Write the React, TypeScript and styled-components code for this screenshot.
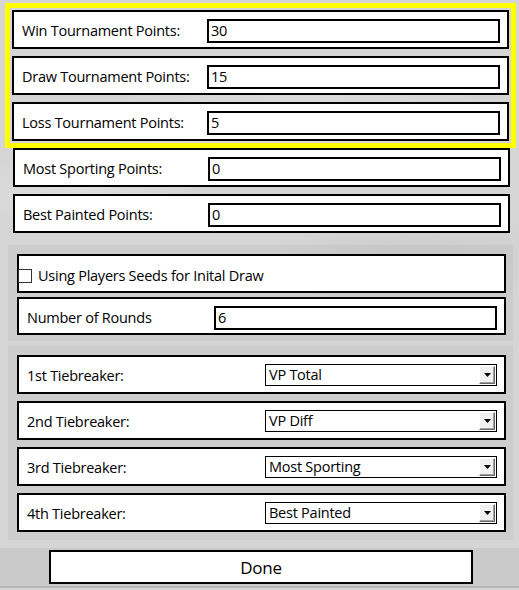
import React, { useState } from 'react';
import styled, { createGlobalStyle } from 'styled-components';

// TYPES
interface FieldRowProps {
    label: string;
    value: string;
}

interface TieProps {
    label: string;
    value: string;
}

// STYLES
const font = `'Open Sans', 'Noto Sans', 'DejaVu Sans', sans-serif`;

const GlobalStyle = createGlobalStyle`
    html, body {
        margin: 0;
        padding: 0;
        background: #d4d4d4;
    }
    * {
        box-sizing: border-box;
    }
`;

const Screen = styled.div`
    width: 519px;
    height: 590px;
    overflow: hidden;
    font-family: ${font};
    font-size: 14.5px;
    letter-spacing: -0.25px;
    color: #000;
    background:
        radial-gradient(ellipse 120px 40px at 80px 190px, rgba(255, 255, 255, 0.25), transparent),
        radial-gradient(ellipse 160px 50px at 420px 260px, rgba(0, 0, 0, 0.04), transparent),
        radial-gradient(ellipse 200px 60px at 300px 120px, rgba(255, 255, 255, 0.2), transparent),
        #d5d5d5;
    display: flex;
    flex-direction: column;
    padding-top: 3px;
`;

const Highlight = styled.div`
    margin-left: 5px;
    width: 511px;
    border: 5px solid #ffff00;
    padding: 2px 1px 2px 2px;
    display: flex;
    flex-direction: column;
    gap: 7px;
`;

const Plain = styled.div`
    margin-left: 13px;
    width: 497px;
    display: flex;
    flex-direction: column;
    gap: 7px;
`;

const Box = styled.div<{ $h?: number }>`
    height: ${({ $h }) => $h ?? 39}px;
    background: #fff;
    border: 2px solid #000;
    display: flex;
    align-items: flex-start;
    position: relative;
`;

const Row = styled(Box)`
    width: 497px;
    padding: 7px 7px 0 8px;
`;

const Label = styled.div<{ $w: number }>`
    width: ${({ $w }) => $w}px;
    flex-shrink: 0;
    line-height: 24px;
    white-space: nowrap;
`;

const TextInput = styled.div<{ $w: number }>`
    width: ${({ $w }) => $w}px;
    height: 24px;
    border: 2px solid #000;
    background: #fff;
    padding-left: 2px;
    line-height: 20px;
`;

const Panel = styled.div<{ $top: number; $h: number; $gap: number }>`
    margin-top: ${({ $top }) => $top}px;
    margin-left: 8px;
    width: 505px;
    height: ${({ $h }) => $h}px;
    background: rgba(0, 0, 0, 0.035);
    padding: 9px 0 0 9px;
    display: flex;
    flex-direction: column;
    gap: ${({ $gap }) => $gap}px;
`;

const InnerBox = styled(Box)`
    width: 489px;
    padding: 7px 7px 0 8px;
`;

const CheckRow = styled(InnerBox)`
    padding: 4px 0 0 0;
    align-items: center;
    gap: 6px;
    cursor: pointer;
`;

const CheckSquare = styled.span`
    margin-left: -1px;
    width: 14px;
    height: 14px;
    border: 1px solid #333;
    background: #fff;
`;

const Select = styled.div`
    width: 232px;
    height: 22px;
    border: 1px solid #000;
    background: #fff;
    display: flex;
    align-items: stretch;
`;

const SelectText = styled.div`
    flex: 1;
    padding-left: 3px;
    line-height: 20px;
`;

const Arrow = styled.div`
    width: 16px;
    margin: 1px;
    background: #f0f0f0;
    border-top: 1px solid #fff;
    border-left: 1px solid #fff;
    border-right: 1px solid #696969;
    border-bottom: 1px solid #696969;
    box-shadow: inset -1px -1px 0 #a0a0a0;
    display: flex;
    align-items: center;
    justify-content: center;
`;

const Footer = styled.div`
    margin-top: 8px;
    height: 40px;
    background: rgba(0, 0, 0, 0.05);
    border-bottom: 2px solid #b5b5b5;
    padding: 2px 0 0 49px;
`;

const DoneButton = styled.button`
    width: 424px;
    height: 34px;
    background: #fff;
    border: 2px solid #000;
    font-family: ${font};
    font-size: 17px;
    letter-spacing: -0.2px;
    color: #000;
    padding: 0;
    cursor: pointer;
`;

// COMPONENTS
const FieldRow = ({ label, value }: FieldRowProps) => (
    <Row>
        <Label $w={185}>{label}</Label>
        <TextInput $w={293}>{value}</TextInput>
    </Row>
);

const TieRow = ({ label, value }: TieProps) => (
    <InnerBox>
        <Label $w={238}>{label}</Label>
        <Select>
            <SelectText>{value}</SelectText>
            <Arrow>
                <svg width="7" height="4" viewBox="0 0 7 4">
                    <path d="M0 0h7L3.5 4z" fill="#000" />
                </svg>
            </Arrow>
        </Select>
    </InnerBox>
);

export default function App() {
    const [seeded, setSeeded] = useState(false);

    return (
        <Screen>
            <GlobalStyle />
            <Highlight>
                <FieldRow label="Win Tournament Points:" value="30" />
                <FieldRow label="Draw Tournament Points:" value="15" />
                <FieldRow label="Loss Tournament Points:" value="5" />
            </Highlight>
            <Plain>
                <FieldRow label="Most Sporting Points:" value="0" />
                <FieldRow label="Best Painted Points:" value="0" />
            </Plain>
            <Panel $top={12} $h={96} $gap={4}>
                <CheckRow onClick={() => setSeeded(!seeded)}>
                    <CheckSquare />
                    <span>Using Players Seeds for Inital Draw</span>
                </CheckRow>
                <InnerBox $h={38}>
                    <Label $w={187}>Number of Rounds</Label>
                    <TextInput $w={285}>6</TextInput>
                </InnerBox>
            </Panel>
            <Panel $top={5} $h={194} $gap={7}>
                <TieRow label="1st Tiebreaker:" value="VP Total" />
                <TieRow label="2nd Tiebreaker:" value="VP Diff" />
                <TieRow label="3rd Tiebreaker:" value="Most Sporting" />
                <TieRow label="4th Tiebreaker:" value="Best Painted" />
            </Panel>
            <Footer>
                <DoneButton>Done</DoneButton>
            </Footer>
        </Screen>
    );
}
